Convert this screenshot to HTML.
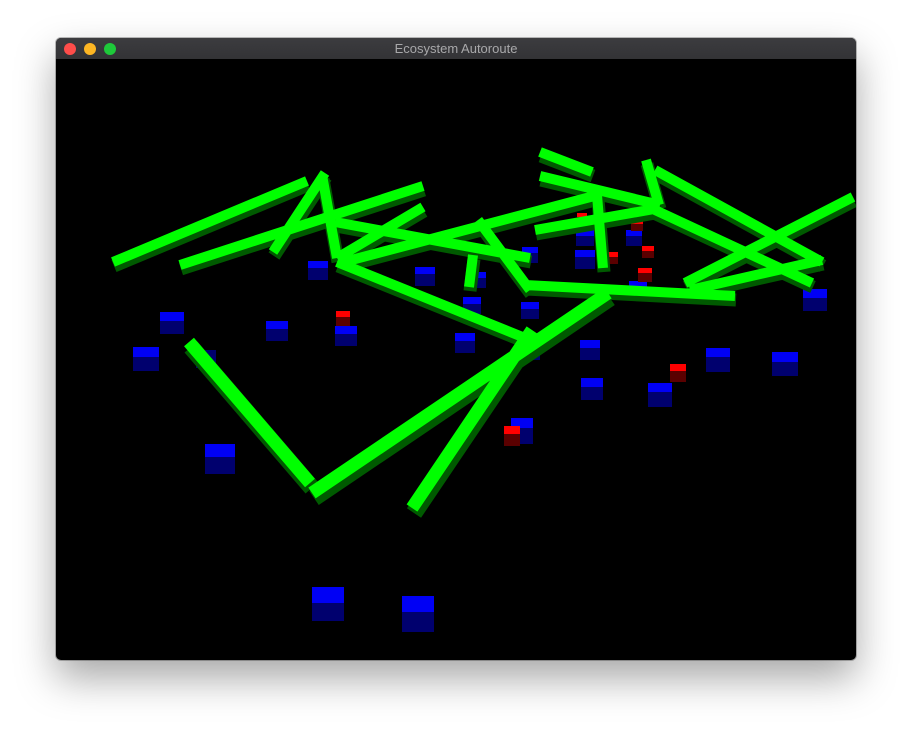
<!DOCTYPE html>
<html><head><style>
html,body{margin:0;padding:0;background:#fff;width:912px;height:734px;overflow:hidden}
.win{position:absolute;left:56px;top:38px;width:800px;height:622px;border-radius:5px;overflow:hidden;box-shadow:0 18px 40px rgba(0,0,0,.35),0 0 0 1px rgba(0,0,0,.25);background:#000}
.tb{position:absolute;left:0;top:0;width:800px;height:21px;background:linear-gradient(#3c3c3f,#333336);font:13px "Liberation Sans",sans-serif;color:#a8a8aa;text-align:center;line-height:21px}
.d{position:absolute;top:5px;width:12px;height:12px;border-radius:50%}
svg{position:absolute;left:0;top:21px}
</style></head><body>
<div class="win">
<div class="tb">Ecosystem Autoroute
<div class="d" style="left:8px;background:#fe4d4a"></div>
<div class="d" style="left:28px;background:#fdb623"></div>
<div class="d" style="left:48px;background:#1ec93a"></div>
</div>
<svg width="800" height="601" viewBox="56 59 800 601">
<g id="cubes">
<g fill="#00006e">
<rect x="160" y="312" width="24" height="22"/><rect x="133" y="347" width="26" height="24"/><rect x="266" y="321" width="22" height="20"/><rect x="335" y="326" width="22" height="20"/><rect x="308" y="261" width="20" height="19"/><rect x="415" y="267" width="20" height="19"/><rect x="455" y="333" width="20" height="20"/><rect x="463" y="297" width="18" height="17"/><rect x="521" y="302" width="18" height="17"/><rect x="580" y="340" width="20" height="20"/><rect x="581" y="378" width="22" height="22"/><rect x="648" y="383" width="24" height="24"/><rect x="706" y="348" width="24" height="24"/><rect x="772" y="352" width="26" height="24"/><rect x="803" y="289" width="24" height="22"/><rect x="205" y="444" width="30" height="30"/><rect x="312" y="587" width="32" height="34"/><rect x="402" y="596" width="32" height="36"/><rect x="511" y="418" width="22" height="26"/><rect x="575" y="250" width="20" height="19"/><rect x="576" y="229" width="18" height="17"/><rect x="626" y="230" width="16" height="16"/><rect x="629" y="281" width="18" height="17"/><rect x="522" y="247" width="16" height="16"/><rect x="470" y="272" width="16" height="16"/><rect x="196" y="350" width="20" height="18"/><rect x="528" y="340" width="12" height="20"/></g>
<g fill="#0000f5">
<rect x="160" y="312" width="24" height="9"/><rect x="133" y="347" width="26" height="10"/><rect x="266" y="321" width="22" height="8"/><rect x="335" y="326" width="22" height="8"/><rect x="308" y="261" width="20" height="7"/><rect x="415" y="267" width="20" height="7"/><rect x="455" y="333" width="20" height="8"/><rect x="463" y="297" width="18" height="7"/><rect x="521" y="302" width="18" height="7"/><rect x="580" y="340" width="20" height="8"/><rect x="581" y="378" width="22" height="9"/><rect x="648" y="383" width="24" height="9"/><rect x="706" y="348" width="24" height="9"/><rect x="772" y="352" width="26" height="10"/><rect x="803" y="289" width="24" height="9"/><rect x="205" y="444" width="30" height="13"/><rect x="312" y="587" width="32" height="16"/><rect x="402" y="596" width="32" height="16"/><rect x="511" y="418" width="22" height="10"/><rect x="575" y="250" width="20" height="7"/><rect x="576" y="229" width="18" height="7"/><rect x="626" y="230" width="16" height="6"/><rect x="629" y="281" width="18" height="7"/><rect x="522" y="247" width="16" height="6"/><rect x="470" y="272" width="16" height="6"/></g>
<g fill="#5a0000">
<rect x="336" y="311" width="14" height="15"/><rect x="504" y="426" width="16" height="20"/><rect x="670" y="364" width="16" height="18"/><rect x="638" y="268" width="14" height="14"/><rect x="606" y="252" width="12" height="12"/><rect x="642" y="246" width="12" height="12"/><rect x="631" y="219" width="12" height="12"/><rect x="577" y="213" width="10" height="10"/></g>
<g fill="#f00">
<rect x="336" y="311" width="14" height="6"/><rect x="504" y="426" width="16" height="8"/><rect x="670" y="364" width="16" height="7"/><rect x="638" y="268" width="14" height="5"/><rect x="606" y="252" width="12" height="5"/><rect x="642" y="246" width="12" height="5"/><rect x="631" y="219" width="12" height="5"/><rect x="577" y="213" width="10" height="4"/></g>
</g>
<g stroke-linecap="butt">
<g stroke="#005a00" stroke-width="13" transform="translate(1,4)">
<path d="M113 262L307 181M180 265L423 186M273 252L325 173M322 175L337 258M337 258L423 207M335 222L530 258M340 263L598 195M337 262L530 340M469 287L473 255M478 220L530 290M525 285L735 296M540 152L592 172M540 176L660 205M535 230L660 208M597 195L603 268M646 160L659 205M655 170L822 262M655 210L812 283M685 283L853 197M690 290L822 260"/>
</g>
<g stroke="#00ff00" stroke-width="10">
<path d="M113 262L307 181M180 265L423 186M273 252L325 173M322 175L337 258M337 258L423 207M335 222L530 258M340 263L598 195M337 262L530 340M469 287L473 255M478 220L530 290M525 285L735 296M540 152L592 172M540 176L660 205M535 230L660 208M597 195L603 268M646 160L659 205M655 170L822 262M655 210L812 283M685 283L853 197M690 290L822 260"/>
</g>
<g stroke="#005a00" stroke-width="17" transform="translate(2,5)">
<path d="M189 342L310 483M312 493L608 293M412 508L532 330"/>
</g>
<g stroke="#00ff00" stroke-width="13">
<path d="M189 342L310 483M312 493L608 293M412 508L532 330"/>
</g>
</g>
</svg>
</div>
</body></html>
